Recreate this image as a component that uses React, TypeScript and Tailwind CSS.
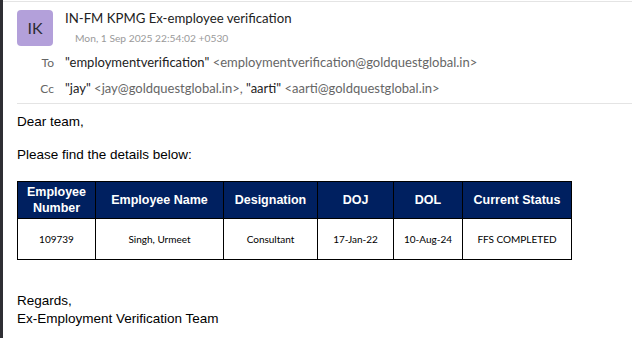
const COLUMNS: Array<{ label: string; width: number }> = [
  { label: "Employee Number", width: 78 },
  { label: "Employee Name", width: 128 },
  { label: "Designation", width: 94 },
  { label: "DOJ", width: 76 },
  { label: "DOL", width: 69 },
  { label: "Current Status", width: 109 },
];

const ROW = ["109739", "Singh, Urmeet", "Consultant", "17-Jan-22", "10-Aug-24", "FFS COMPLETED"];

const RECIPIENTS: Array<{ label: string; people: Array<{ name: string; email: string }> }> = [
  {
    label: "To",
    people: [{ name: "employmentverification", email: "employmentverification@goldquestglobal.in" }],
  },
  {
    label: "Cc",
    people: [
      { name: "jay", email: "jay@goldquestglobal.in" },
      { name: "aarti", email: "aarti@goldquestglobal.in" },
    ],
  },
];

export default function App() {
  return (
    <div className="flex h-[338px] w-[632px] overflow-hidden bg-white">
      <div className="w-[3px] shrink-0 bg-[#2f2f34]" />

      <div className="flex-1">
        <div className="mt-[1px] border-t border-[#e4e4e4]" />

        {/* message header */}
        <div className="flex pl-[14px] pt-[6px] font-['Lato',sans-serif]">
          <div className="mt-[2px] flex h-[36px] w-[36px] items-center justify-center rounded-[4px] bg-[#b3a0da] text-[16px] text-[#2b2b33]">
            IK
          </div>
          <div className="ml-[12px]">
            <div className="text-[13.2px] leading-[20px] text-[#222]">IN-FM KPMG Ex-employee verification</div>
            <div className="mt-[1px] pl-[10px] text-[10.25px] leading-[18px] text-[#9a9a9a]">
              Mon, 1 Sep 2025 22:54:02 +0530
            </div>
          </div>
        </div>

        <div className="mt-[3px] pl-[14px] font-['Lato',sans-serif]">
          {RECIPIENTS.map((r) => (
            <div key={r.label} className="flex h-[26px] items-center">
              <span className="w-[37px] text-right text-[12px] text-[#666]">{r.label}</span>
              <span className="ml-[11px] text-[13px]">
                {r.people.map((p, i) => (
                  <span key={p.email}>
                    {i > 0 && <span className="text-[#666]">, </span>}
                    <span className="text-[#222]">"{p.name}"</span>
                    <span className="text-[#666]"> &lt;{p.email}&gt;</span>
                  </span>
                ))}
              </span>
            </div>
          ))}
        </div>

        <div className="ml-[14px] mt-[1px] border-t border-[#e4e4e4]" />

        {/* message body */}
        <div className="pl-[14px] font-['Liberation_Sans',Arial,sans-serif] text-[13.5px] leading-[18px] text-black">
          <p className="mt-[9px]">Dear team,</p>
          <p className="mt-[15px]">Please find the details below:</p>

          <table className="mt-[17px] table-fixed border-collapse border border-black">
            <colgroup>
              {COLUMNS.map((c) => (
                <col key={c.label} style={{ width: c.width }} />
              ))}
            </colgroup>
            <thead>
              <tr>
                {COLUMNS.map((c) => (
                  <th
                    key={c.label}
                    className="h-[37px] border border-black bg-[#002060] px-1 text-center text-[12.5px] font-bold leading-[16px] text-white"
                  >
                    {c.label}
                  </th>
                ))}
              </tr>
            </thead>
            <tbody>
              <tr>
                {ROW.map((v) => (
                  <td
                    key={v}
                    className="h-[41px] border border-black text-center font-['Lato',sans-serif] text-[10px] text-black"
                  >
                    {v}
                  </td>
                ))}
              </tr>
            </tbody>
          </table>

          <p className="mt-[32px]">Regards,</p>
          <p>Ex-Employment Verification Team</p>
        </div>
      </div>
    </div>
  );
}
